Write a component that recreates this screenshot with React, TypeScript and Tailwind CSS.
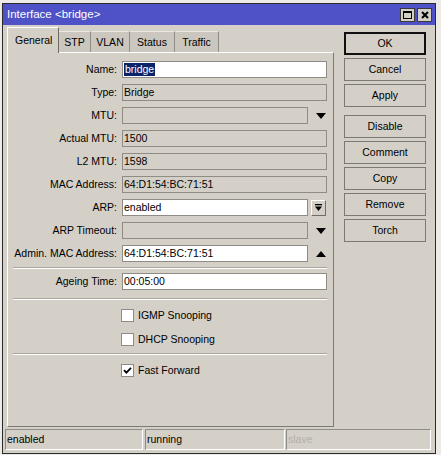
import React from 'react';

type Suffix = 'none' | 'down' | 'up' | 'button';

function DownArrow() {
  return (
    <svg width="10" height="6" viewBox="0 0 10 6">
      <path d="M0 0 H10 L5 6 Z" fill="#000" />
    </svg>
  );
}

function UpArrow() {
  return (
    <svg width="10" height="6" viewBox="0 0 10 6">
      <path d="M0 6 H10 L5 0 Z" fill="#000" />
    </svg>
  );
}

function Row({
  label,
  value = '',
  white = false,
  selected = false,
  suffix = 'none',
}: {
  label: string;
  value?: string;
  white?: boolean;
  selected?: boolean;
  suffix?: Suffix;
}) {
  const short = suffix !== 'none';
  return (
    <div className="flex h-[17px] items-center">
      <div className="w-[109px] text-right leading-none">{label}</div>
      <div
        className={`ml-[5px] flex h-[17px] items-center border border-[#8f8c86] pl-[1px] leading-none ${
          short ? 'w-[186px]' : 'w-[205px]'
        } ${white ? 'bg-white' : 'bg-[#d4d0c8]'}`}
      >
        {selected ? <span className="bg-[#0a246a] px-[1px] py-[1px] text-white">{value}</span> : value}
      </div>
      {suffix === 'down' && (
        <div className="flex w-[19px] items-center justify-center pl-[6px]">
          <DownArrow />
        </div>
      )}
      {suffix === 'up' && (
        <div className="flex w-[19px] items-center justify-center pl-[6px]">
          <UpArrow />
        </div>
      )}
      {suffix === 'button' && (
        <div className="ml-[3px] flex h-[16px] w-[15px] items-center justify-center border border-t-white border-l-white border-r-[#6f6c66] border-b-[#6f6c66] bg-[#d4d0c8]">
          <svg width="7" height="7" viewBox="0 0 7 7">
            <rect x="0" y="0" width="7" height="1.3" fill="#000" />
            <path d="M0 2.5 H7 L3.5 7 Z" fill="#000" />
          </svg>
        </div>
      )}
    </div>
  );
}

function Separator({ className = '' }: { className?: string }) {
  return <div className={`ml-[5px] w-[314px] border-t border-t-[#a9a59d] border-b border-b-white ${className}`} />;
}

function Check({ label, checked = false, className = '' }: { label: string; checked?: boolean; className?: string }) {
  return (
    <div className={`flex h-[13px] items-center pl-[113px] ${className}`}>
      <div className="flex h-[13px] w-[13px] items-center justify-center border border-[#8f8c86] bg-white">
        {checked && (
          <svg width="9" height="9" viewBox="0 0 9 9">
            <path d="M1 4.2 L3.4 6.6 L8 1.8" stroke="#000" strokeWidth="1.8" fill="none" />
          </svg>
        )}
      </div>
      <span className="ml-[4px] leading-none">{label}</span>
    </div>
  );
}

function Button({ label, primary = false, className = '' }: { label: string; primary?: boolean; className?: string }) {
  return (
    <div
      className={`flex h-[23px] w-[82px] items-center justify-center bg-[#d4d0c8] leading-none ${
        primary ? 'border-2 border-[#111]' : 'border border-[#7c7973]'
      } ${className}`}
    >
      {label}
    </div>
  );
}

const tabs = [
  { name: 'STP', w: 'w-[32px]' },
  { name: 'VLAN', w: 'w-[39px]' },
  { name: 'Status', w: 'w-[45px]' },
  { name: 'Traffic', w: 'w-[44px]' },
];

export default function App() {
  return (
    <div className="h-[455px] w-[441px] overflow-hidden bg-[#ecebe8] pl-[2px] pt-[3px] font-['Liberation_Sans',Arial,sans-serif] text-[10.5px] text-black">
      <div className="flex h-[451px] w-[434px] flex-col border border-[#2b2b2b] bg-[#d4d0c8]">
        {/* title bar */}
        <div className="flex h-[21px] items-center bg-[#4e52c6] pl-[4px] pr-[3px]">
          <span className="text-[11.5px] leading-none text-white">Interface &lt;bridge&gt;</span>
          <div className="ml-auto flex gap-[2px]">
            <div className="flex h-[14px] w-[15px] items-center justify-center border border-[#3a3a3a] bg-[#d4d0c8]">
              <div className="h-[8px] w-[9px] border border-t-2 border-black" />
            </div>
            <div className="flex h-[14px] w-[15px] items-center justify-center border border-[#3a3a3a] bg-[#d4d0c8]">
              <svg width="8" height="8" viewBox="0 0 8 8">
                <path d="M1 1 L7 7 M7 1 L1 7" stroke="#000" strokeWidth="2" />
              </svg>
            </div>
          </div>
        </div>

        <div className="flex flex-1 flex-col">
          <div className="flex">
            {/* left column */}
            <div className="ml-[4px] flex w-[327px] flex-col">
              <div className="mt-[2px] flex h-[25px] items-end">
                <div className="relative z-10 -mb-[1px] flex h-[26px] w-[52px] items-start border-l border-t border-r border-l-white border-t-white border-r-[#6f6c66] bg-[#d4d0c8] pl-[7px] pt-[7px] leading-none">
                  General
                </div>
                {tabs.map((t) => (
                  <div
                    key={t.name}
                    className={`flex h-[21px] ${t.w} items-center justify-center border-t border-r border-t-[#e9e7e2] border-r-[#8f8c86] bg-[#cbc7bf] leading-none`}
                  >
                    {t.name}
                  </div>
                ))}
              </div>

              <div className="flex h-[375px] flex-col border border-t-white border-l-white border-r-[#7c7973] border-b-[#7c7973] pt-[8px]">
                <div className="flex flex-col gap-[6px]">
                  <Row label="Name:" value="bridge" white selected />
                  <Row label="Type:" value="Bridge" />
                  <Row label="MTU:" suffix="down" />
                  <Row label="Actual MTU:" value="1500" />
                  <Row label="L2 MTU:" value="1598" />
                  <Row label="MAC Address:" value="64:D1:54:BC:71:51" />
                  <Row label="ARP:" value="enabled" white suffix="button" />
                  <Row label="ARP Timeout:" suffix="down" />
                  <Row label="Admin. MAC Address:" value="64:D1:54:BC:71:51" white suffix="up" />
                </div>
                <Separator className="mt-[5px]" />
                <div className="mt-[4px]">
                  <Row label="Ageing Time:" value="00:05:00" white />
                </div>
                <Separator className="mt-[8px]" />
                <Check label="IGMP Snooping" className="mt-[9px]" />
                <Check label="DHCP Snooping" className="mt-[11px]" />
                <Separator className="mt-[7px]" />
                <Check label="Fast Forward" checked className="mt-[9px]" />
              </div>
            </div>

            {/* right column */}
            <div className="ml-[10px] flex flex-col gap-[3px] pt-[7px]">
              <Button label="OK" primary />
              <Button label="Cancel" />
              <Button label="Apply" />
              <Button label="Disable" className="mt-[5px]" />
              <Button label="Comment" />
              <Button label="Copy" />
              <Button label="Remove" />
              <Button label="Torch" />
            </div>
          </div>

          {/* status bar */}
          <div className="mt-[2px] flex h-[21px] pl-[2px]">
            <div className="flex w-[138px] items-center border border-t-[#8f8c86] border-l-[#8f8c86] border-r-white border-b-white pl-[1px] leading-none">
              enabled
            </div>
            <div className="ml-[2px] flex w-[140px] items-center border border-t-[#8f8c86] border-l-[#8f8c86] border-r-white border-b-white pl-[1px] leading-none">
              running
            </div>
            <div className="ml-[1px] flex w-[145px] items-center border border-t-[#8f8c86] border-l-[#8f8c86] border-r-white border-b-white pl-[1px] leading-none text-[#b3afa8]">
              slave
            </div>
          </div>
        </div>
      </div>
    </div>
  );
}
